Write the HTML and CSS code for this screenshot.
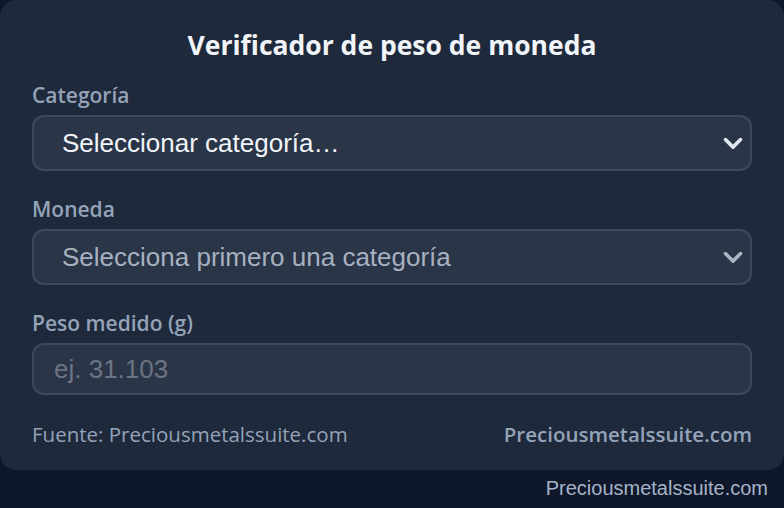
FILE: index.html
```html
<!DOCTYPE html>
<html lang="es">
<head>
    <meta charset="UTF-8">
    <meta name="viewport" content="width=device-width, initial-scale=1.0">
    <title>Verificador de peso de moneda</title>
    <link rel="stylesheet" href="styles.css">
</head>
<body>

    <div class="card">
        <h2 class="title">Verificador de peso de moneda</h2>

        <div class="field">
            <label for="category">Categoría</label>
            <div class="select-wrap">
                <select id="category">
                    <option>Seleccionar categoría…</option>
                </select>
                <svg class="chevron" viewBox="0 0 16 16" width="16" height="16"><path d="M2.5 5.5 8 11l5.5-5.5" fill="none" stroke="#e2e8f0" stroke-width="2.6" stroke-linecap="round" stroke-linejoin="round"/></svg>
            </div>
        </div>

        <div class="field">
            <label for="coin">Moneda</label>
            <div class="select-wrap">
                <select id="coin" class="muted">
                    <option>Selecciona primero una categoría</option>
                </select>
                <svg class="chevron" viewBox="0 0 16 16" width="16" height="16"><path d="M2.5 5.5 8 11l5.5-5.5" fill="none" stroke="#aab4c3" stroke-width="2.6" stroke-linecap="round" stroke-linejoin="round"/></svg>
            </div>
        </div>

        <div class="field">
            <label for="weight">Peso medido (g)</label>
            <input type="text" id="weight" placeholder="ej. 31.103">
        </div>

        <div class="footer">
            <span>Fuente: Preciousmetalssuite.com</span>
            <a href="#" class="brand">Preciousmetalssuite.com</a>
        </div>
    </div>

    <p class="credit">Preciousmetalssuite.com</p>

</body>
</html>
```

FILE: styles.css
```css
body { margin: 0; background: #0f172a; font-family: "Open Sans", "Noto Sans", sans-serif; }
.card { background: #1e293b; border-radius: 16px; padding: 26px 32px 22px; }
.title { margin: 0 0 18px; text-align: center; color: #f1f5f9; font-size: 26.5px; font-weight: 700; line-height: 38px; }
.field { display: flex; flex-direction: column; gap: 7px; margin-bottom: 25px; }
.field:last-of-type { margin-bottom: 0; }
.field label { color: #94a3b8; font-size: 21px; font-weight: 600; line-height: 26px; }
.select-wrap { position: relative; }
select, input { width: 100%; box-sizing: border-box; background: #2b3548; border: 2px solid #3d4a5e; border-radius: 12px; font-family: "Liberation Sans", Arial, sans-serif; font-size: 26px; color: #f1f5f9; outline: none; }
select { appearance: none; height: 56px; padding: 0 28px; }
select.muted { color: #a7b1c0; }
input { height: 52px; padding: 0 20px; }
input::placeholder { color: #6b7482; }
.chevron { position: absolute; right: 8px; top: 50%; transform: translateY(-50%); width: 22px; height: 22px; pointer-events: none; }
.footer { display: flex; justify-content: space-between; align-items: center; margin-top: 24px; line-height: 28px; color: #94a3b8; font-size: 20.5px; }
.brand { color: #94a3b8; font-weight: 600; text-decoration: none; }
.credit { margin: 6px 16px 0 0; line-height: 24px; text-align: right; color: #a5b4c8; font-family: "Liberation Sans", Arial, sans-serif; font-size: 20px; }
```
